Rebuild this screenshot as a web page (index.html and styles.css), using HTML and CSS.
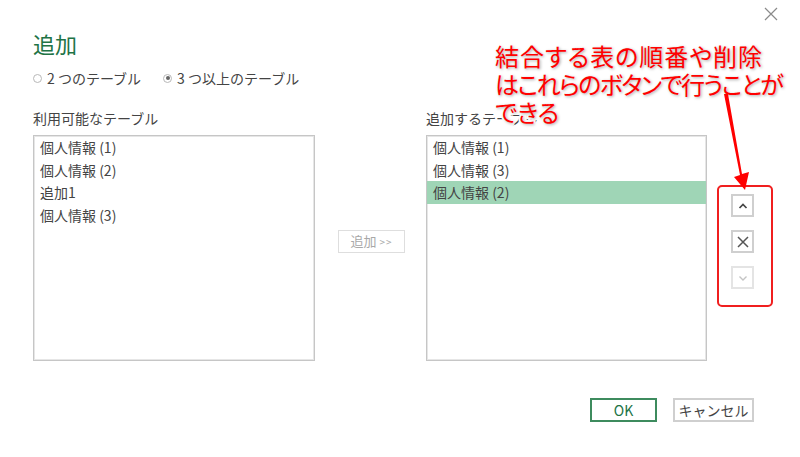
FILE: index.html
```html
<!DOCTYPE html>
<html lang="ja">
<head>
<meta charset="utf-8">
<title>追加</title>
<link rel="stylesheet" href="styles.css">
</head>
<body>
<div class="dialog">
  <button class="close" aria-label="閉じる">
    <svg width="14" height="14" viewBox="0 0 14 14"><path d="M1 1L13 13M13 1L1 13" stroke="#8a8a8a" stroke-width="1.2" fill="none"/></svg>
  </button>
  <h1 class="title">追加</h1>
  <div class="radios">
    <label class="radio"><span class="dot"></span>2 つのテーブル</label>
    <label class="radio checked"><span class="dot"></span>3 つ以上のテーブル</label>
  </div>
  <div class="main">
    <div class="col">
      <div class="label">利用可能なテーブル</div>
      <ul class="list">
        <li>個人情報 (1)</li>
        <li>個人情報 (2)</li>
        <li>追加1</li>
        <li>個人情報 (3)</li>
      </ul>
    </div>
    <button class="add">追加 <span class="gt">&gt;&gt;</span></button>
    <div class="col">
      <div class="label">追加するテーブル</div>
      <ul class="list">
        <li>個人情報 (1)</li>
        <li>個人情報 (3)</li>
        <li class="sel">個人情報 (2)</li>
      </ul>
    </div>
    <div class="tools">
      <button class="tool">
        <svg width="12" height="12" viewBox="0 0 12 12"><path d="M2.5 8L6 4.5L9.5 8" stroke="#444" stroke-width="1.7" fill="none"/></svg>
      </button>
      <button class="tool">
        <svg width="14" height="14" viewBox="0 0 14 14"><path d="M2 2L12 12M12 2L2 12" stroke="#555" stroke-width="1.5" fill="none"/></svg>
      </button>
      <button class="tool disabled">
        <svg width="12" height="12" viewBox="0 0 12 12"><path d="M2.5 4.5L6 8L9.5 4.5" stroke="#c4c4c4" stroke-width="1.4" fill="none"/></svg>
      </button>
    </div>
  </div>
  <div class="footer">
    <button class="btn ok">OK</button>
    <button class="btn">キャンセル</button>
  </div>

  <div class="note">
    <span class="line wide">結合する表の順番や削除</span>
    <span class="line narrow">はこれらのボタンで行うことが</span>
    <span class="line">できる</span>
  </div>
  <svg class="arrow" width="40" height="100" viewBox="0 0 40 100">
    <polygon points="3,0 7,0 21,80 28,78 24,96 13,83 19,81" fill="#ff0000"/>
  </svg>
</div>
</body>
</html>
```
FILE: styles.css
```css
* { box-sizing: border-box; }
html, body { margin: 0; padding: 0; background: #fff; }
body {
  width: 800px;
  height: 457px;
  overflow: hidden;
  font-family: "Noto Sans CJK JP", "Noto Sans", sans-serif;
  color: #444;
  font-size: 14px;
}
.dialog {
  position: relative;
  width: 800px;
  height: 457px;
  padding: 28px 0 0 33px;
}
.close {
  position: absolute;
  top: 7px;
  right: 22px;
  border: 0;
  background: none;
  padding: 0;
  width: 14px;
  height: 14px;
}
.close svg { display: block; }
.title {
  margin: 0;
  font-size: 22px;
  font-weight: normal;
  line-height: 30px;
  height: 30px;
  color: #217346;
}
.radios {
  display: flex;
  gap: 22px;
  margin-top: 10px;
  height: 20px;
  line-height: 20px;
  align-items: center;
}
.radio {
  display: flex;
  align-items: center;
  gap: 5px;
  font-size: 14px;
  color: #444;
}
.dot {
  width: 9px;
  height: 9px;
  border-radius: 50%;
  border: 1px solid #b8b8b8;
  position: relative;
}
.checked .dot::after {
  content: "";
  position: absolute;
  left: 1.5px;
  top: 1.5px;
  width: 4px;
  height: 4px;
  border-radius: 50%;
  background: #666;
}
.main {
  display: flex;
  margin-top: 20px;
  align-items: flex-start;
}
.col { display: flex; flex-direction: column; }
.label {
  height: 20px;
  line-height: 20px;
  font-size: 14px;
  margin-bottom: 7px;
}
.list {
  list-style: none;
  margin: 0;
  padding: 0;
  width: 282px;
  height: 226px;
  border: 1px solid #c6c6c6;
  box-shadow: inset 0 0 0 1px #e6e6e6;
}
.col + .add + .col .list { width: 281px; }
.list li {
  height: 22.5px;
  line-height: 22.5px;
  padding-left: 6px;
  font-size: 14px;
  color: #444;
  white-space: nowrap;
}
.list li.sel { background: #9fd5b6; }
.add {
  margin: 122px 21px 0 23px;
  width: 67px;
  height: 23px;
  padding: 0;
  border: 1px solid #dedede;
  background: #fff;
  color: #a8a8a8;
  font-family: inherit;
  font-size: 13px;
  line-height: 20px;
}
.add .gt { font-size: 10px; letter-spacing: 1px; }
.tools {
  margin: 77px 0 0 10px;
  width: 56px;
  height: 122px;
  border: 2px solid #f01f1f;
  border-radius: 5px;
  padding: 7px 0 0 12px;
  display: flex;
  flex-direction: column;
  gap: 13px;
}
.tool {
  width: 23px;
  height: 23px;
  padding: 0;
  border: 2px solid #cfcfcf;
  background: #fff;
  display: flex;
  align-items: center;
  justify-content: center;
}
.tool.disabled { border-color: #e4e4e4; }
.tool svg { display: block; }
.footer {
  display: flex;
  justify-content: flex-end;
  gap: 16px;
  margin-top: 37px;
  padding-right: 46px;
}
.btn {
  height: 24px;
  width: 81px;
  padding: 0;
  border: 2px solid #cfcfcf;
  background: #fff;
  font-family: inherit;
  font-size: 14px;
  color: #444;
  line-height: 20px;
}
.btn.ok {
  width: 67px;
  border-color: #3d8b5e;
  color: #217346;
}
.note {
  position: absolute;
  left: 495px;
  top: 42px;
  display: flex;
  flex-direction: column;
  font-size: 24px;
  line-height: 28px;
  color: #ff0000;
  font-feature-settings: "palt";
  white-space: nowrap;
  paint-order: stroke fill;
  -webkit-text-stroke: 4px #fff;
  text-shadow: 1px 1px 3px rgba(0,0,0,0.35);
}
.line { display: block; }
.line.wide { letter-spacing: 1px; }
.line.narrow { letter-spacing: -1.6px; }
.arrow {
  position: absolute;
  left: 721px;
  top: 94px;
}
```
